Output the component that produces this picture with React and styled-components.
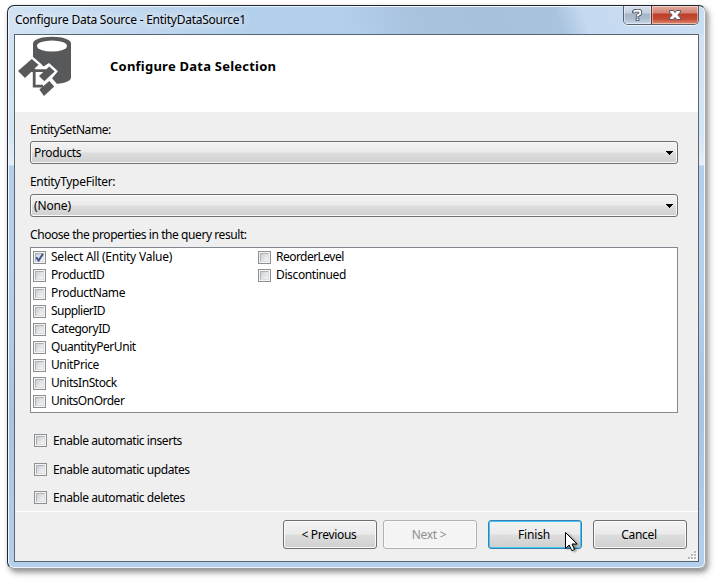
import React from "react";
import styled, { createGlobalStyle, css } from "styled-components";

const Global = createGlobalStyle`
  * { box-sizing: border-box; }
  body { margin: 0; background: #fff; overflow: hidden; }
`;

const Desktop = styled.div`
  width: 718px;
  height: 583px;
  padding: 5px 0 0 7px;
  background: #fff;
  font: 12px/16px "Noto Sans", "Open Sans", sans-serif;
  color: #000;
`;

const Window = styled.section`
  position: relative;
  width: 699px;
  height: 564px;
  border: 1px solid #20242c;
  border-right-color: #a8acb0;
  border-bottom-color: #989ca0;
  border-radius: 7px;
  padding: 0 6px 6px;
  background:
    linear-gradient(70deg, #d3e3f5 0, #bfd7ef 125px, #b2cfeb 240px, #b1ceea 325px, #a9c3df 385px, #a7c1dc 455px, #a9c3df 522px, #c5daf0 548px, #c9def2 660px) 0 0 / 100% 28px no-repeat,
    linear-gradient(#d2e2f2 0, #d3e4f3 100px, #e5eef8 131px, #b3cfeb 132px, #b5d2ed 230px, #a9c4e0 380px, #b6d2ee 100%) 0 28px / 100% 100% no-repeat;
  box-shadow: inset 0 0 0 1px #eef5fb, 2px 3px 5px rgba(0, 0, 0, 0.35), 3px 4px 8px rgba(0, 0, 0, 0.15);
`;

const TitleBar = styled.header`
  height: 28px;
  display: flex;
  justify-content: space-between;
  align-items: flex-start;
`;

const Title = styled.h1`
  margin: 6px 0 0 1px;
  font: inherit;
  line-height: 16px;
  letter-spacing: -0.25px;
  white-space: nowrap;
  text-shadow: 0 0 8px rgba(255, 255, 255, 0.9), 0 0 12px rgba(255, 255, 255, 0.8);
`;

const Controls = styled.div`
  display: flex;
  width: 76px;
  height: 19px;
  border: 1px solid #59616c;
  border-top: 0;
  border-radius: 0 0 5px 5px;
  overflow: hidden;
  box-shadow: 0 1px 0 rgba(255, 255, 255, 0.65);
`;

const ControlButton = styled.button`
  display: flex;
  align-items: center;
  justify-content: center;
  padding: 0;
  border: 0;
  height: 18px;
  width: ${(p) => (p.$close ? "47px" : "27px")};
  box-shadow: inset 0 0 0 1px rgba(255, 255, 255, 0.45);
  ${(p) =>
    p.$close
      ? css`
          border-left: 1px solid #6b2a27;
          background: linear-gradient(#e4aa9f 0, #d28272 7px, #bd3f2b 8px, #c44a32 13px, #dd8a70 18px);
        `
      : css`
          background: linear-gradient(#d4e0ed 0, #c3d0df 7px, #a5b4c6 8px, #aebed1 13px, #c8d9eb 18px);
        `}
`;

const Client = styled.main`
  width: 685px;
  height: 528px;
  border: 1px solid #58646f;
  background: #efefef;
  display: flex;
  flex-direction: column;
`;

const Banner = styled.div`
  height: 77px;
  flex: none;
  display: flex;
  background: #fff;
`;

const Logo = styled.svg`
  display: block;
  width: 60px;
  height: 64px;
`;

const Heading = styled.h2`
  margin: 23px 0 0 35px;
  font-size: 13px;
  line-height: 16px;
  font-weight: 700;
  letter-spacing: 0.23px;
  white-space: nowrap;
`;

const Form = styled.div`
  height: 399px;
  flex: none;
  padding: 10px 20px 0 15px;
  display: flex;
  flex-direction: column;
`;

const Label = styled.div`
  height: 16px;
  margin-top: ${(p) => p.$gap || 0}px;
  letter-spacing: ${(p) => p.$track}px;
  white-space: nowrap;
`;

const Select = styled.div`
  flex: none;
  height: 23px;
  margin-top: ${(p) => p.$gap}px;
  padding: 1px 3px 0;
  display: flex;
  justify-content: space-between;
  align-items: center;
  border: 1px solid #707070;
  border-radius: 3px;
  background: linear-gradient(#f2f2f2 0, #ebebeb 10px, #dddddd 11px, #cfcfcf 21px);
  box-shadow: inset 0 0 0 1px #fafafa;
  letter-spacing: ${(p) => p.$track}px;
`;

const List = styled.div`
  flex: none;
  height: 166px;
  margin-top: 4px;
  padding: 0 2px;
  display: grid;
  grid-template-columns: 225px 1fr;
  border: 1px solid #828790;
  background: #fff;
`;

const Row = styled.label`
  display: flex;
  align-items: center;
  gap: ${(p) => (p.$option ? 6 : 5)}px;
  height: 18px;
  letter-spacing: ${(p) => p.$track}px;
  white-space: nowrap;
`;

const RowText = styled.span`
  padding-top: ${(p) => (p.$option ? 2 : 0)}px;
`;

const Options = styled.div`
  display: grid;
  grid-template-rows: 29px 28px 18px;
  padding: 18px 0 0 4px;
`;

const Box = styled.span`
  display: flex;
  flex: none;
  width: 13px;
  height: 13px;
  border: 1px solid #8e8f8f;
  background: #f4f4f4;
  padding: 1px;
`;

const BoxInner = styled.span`
  display: block;
  width: 9px;
  height: 9px;
  border: 1px solid;
  border-color: #aeb3b9 #dcdfe2 #dcdfe2 #aeb3b9;
  background: linear-gradient(135deg, #cbcfd5, #f6f6f6);
`;

const Check = styled.svg`
  display: block;
  width: 9px;
  height: 9px;
  margin: -1px;
  overflow: visible;
`;

const Footer = styled.footer`
  position: relative;
  flex: 1;
  border-top: 1px solid #fff;
  padding: 8px 11px 0 0;
  display: flex;
  justify-content: flex-end;
`;

const PushButton = styled.button`
  width: 94px;
  height: 29px;
  margin-left: ${(p) => p.$gap || 0}px;
  padding: 0 2px 0 0;
  border: 1px solid #707070;
  border-radius: 3px;
  background: linear-gradient(#f2f2f2 0, #ebebeb 13px, #dddddd 14px, #cfcfcf 27px);
  box-shadow: inset 0 0 0 1px #fafafa;
  font: inherit;
  letter-spacing: -0.3px;
  color: #000;
  ${(p) =>
    p.disabled &&
    css`
      border-color: #adb2b5;
      background: #f4f4f4;
      color: #8f8f8f;
    `}
  ${(p) =>
    p.$primary &&
    css`
      border-color: #3c7fb1;
      box-shadow: inset 0 0 0 1px #40c8f4;
      letter-spacing: -0.2px;
    `}
`;

const Grip = styled.svg`
  position: absolute;
  right: 1px;
  bottom: 1px;
  width: 9px;
  height: 9px;
`;

const Cursor = styled.svg`
  position: absolute;
  left: 557px;
  top: 526px;
  width: 18px;
  height: 24px;
  filter: drop-shadow(2px 1px 1px rgba(0, 0, 0, 0.4));
`;

const columns = [
  [
    ["Select All (Entity Value)", -0.22],
    ["ProductID", -0.4],
    ["ProductName", -0.35],
    ["SupplierID", -0.55],
    ["CategoryID", -0.5],
    ["QuantityPerUnit", -0.45],
    ["UnitPrice", -0.4],
    ["UnitsInStock", -0.45],
    ["UnitsOnOrder", -0.5],
  ],
  [
    ["ReorderLevel", -0.53],
    ["Discontinued", -0.37],
  ],
];

const options = [
  ["Enable automatic inserts", -0.43],
  ["Enable automatic updates", -0.43],
  ["Enable automatic deletes", -0.43],
];

const gripDots = [[6, 0], [3, 3], [6, 3], [0, 6], [3, 6], [6, 6]];

function CheckRow({ text, track, checked, option }) {
  return (
    <Row $track={track} $option={option}>
      <Box>
        <BoxInner>
          {checked && (
            <Check viewBox="0 0 9 9">
              <path d="M1.2 4.3 3.7 7.5 8 0.8" fill="none" stroke="#40568f" strokeWidth="2" />
            </Check>
          )}
        </BoxInner>
      </Box>
      <RowText $option={option}>{text}</RowText>
    </Row>
  );
}

function Arrow() {
  return (
    <svg width="8" height="4" viewBox="0 0 8 4" shapeRendering="crispEdges">
      <path d="M0 0H7V1H6V2H5V3H4V4H3V3H2V2H1V1H0Z" fill="#000" />
    </svg>
  );
}

export default function App() {
  return (
    <>
      <Global />
      <Desktop>
        <Window>
          <TitleBar>
            <Title>Configure Data Source - EntityDataSource1</Title>
            <Controls>
              <ControlButton aria-label="Help">
                <svg width="11" height="13" viewBox="-1 0 11 13">
                  <path d="M.9 4.3V2.8Q.9 1.7 3 1.7H6Q7.2 1.7 7.2 2.8V4.2Q7.2 5.2 5.8 5.7Q4.5 6.2 4.5 8.2M4.5 9V12" fill="none" stroke="#454e5d" strokeWidth="3.6" />
                  <path d="M1.2 3.6V2.8Q1.2 1.7 3 1.7H6Q7.2 1.7 7.2 2.8V4.2Q7.2 5.2 5.8 5.7Q4.5 6.2 4.5 7.6M4.5 9.4V11.2" fill="none" stroke="#fff" strokeWidth="1.9" />
                </svg>
              </ControlButton>
              <ControlButton $close aria-label="Close">
                <svg width="12" height="10" viewBox="0 0 12 10">
                  <path d="M.5.5H4.3L6 2.6 7.7.5H11.5V2L8.8 5 11.5 8V9.5H7.7L6 7.4 4.3 9.5H.5V8L3.2 5 .5 2Z" fill="#fff" stroke="#535666" />
                </svg>
              </ControlButton>
            </Controls>
          </TitleBar>
          <Client>
            <Banner>
              <Logo viewBox="0 0 60 64">
                <path d="M18 8.5C18 4.5 26 1.7 37 1.7S56 4.5 56 8.5V42.5C56 46.5 48 49 37 49S18 46.5 18 42.5Z" fill="#58595b" />
                <ellipse cx="37" cy="11" rx="15" ry="5.6" fill="#fff" />
                <path d="M12 25 17 21 26.5 29.2 28.5 31.5 34 28 43 36.3 37 43.3 42.5 49.5 40 54 20 60 10 50Z" fill="#fff" />
                <path d="M3 36 16.7 24 23.5 29.8 10 43Z" fill="#58595b" />
                <path d="M24 41 34.3 31.5 39.7 36.4 29.3 46.2Z" fill="#58595b" />
                <path d="M24.3 54.5 34.3 46 39.2 51.5 29 61Z" fill="#58595b" />
                <path d="M16 35.6H31M19.2 34V51.2H28" fill="none" stroke="#58595b" strokeWidth="2.8" />
              </Logo>
              <Heading>Configure Data Selection</Heading>
            </Banner>
            <Form>
              <Label $track={-0.42}>EntitySetName:</Label>
              <Select $gap={3} $track={-0.33}>Products<Arrow /></Select>
              <Label $gap={10} $track={-0.3}>EntityTypeFilter:</Label>
              <Select $gap={4} $track={-0.15}>(None)<Arrow /></Select>
              <Label $gap={10} $track={-0.43}>Choose the properties in the query result:</Label>
              <List>
                {columns.map((rows, c) => (
                  <div key={c}>
                    {rows.map(([text, track]) => (
                      <CheckRow key={text} text={text} track={track} checked={text.startsWith("Select All")} />
                    ))}
                  </div>
                ))}
              </List>
              <Options>
                {options.map(([text, track]) => (
                  <CheckRow key={text} text={text} track={track} option />
                ))}
              </Options>
            </Form>
            <Footer>
              <PushButton>&lt; Previous</PushButton>
              <PushButton $gap={6} disabled>Next &gt;</PushButton>
              <PushButton $gap={11} $primary>Finish</PushButton>
              <PushButton $gap={11}>Cancel</PushButton>
              <Grip viewBox="0 0 9 9" shapeRendering="crispEdges">
                {gripDots.map(([x, y]) => (
                  <g key={`${x}-${y}`}>
                    <rect x={x + 1} y={y + 1} width="2" height="2" fill="#fff" />
                    <rect x={x} y={y} width="2" height="2" fill="#b9b9b9" />
                  </g>
                ))}
              </Grip>
            </Footer>
          </Client>
          <Cursor viewBox="0 0 18 24">
            <path d="M.5.5V16.5L4.2 13 6.8 18.7 9.5 17.5 7 12H12Z" fill="#fff" stroke="#000" />
          </Cursor>
        </Window>
      </Desktop>
    </>
  );
}
